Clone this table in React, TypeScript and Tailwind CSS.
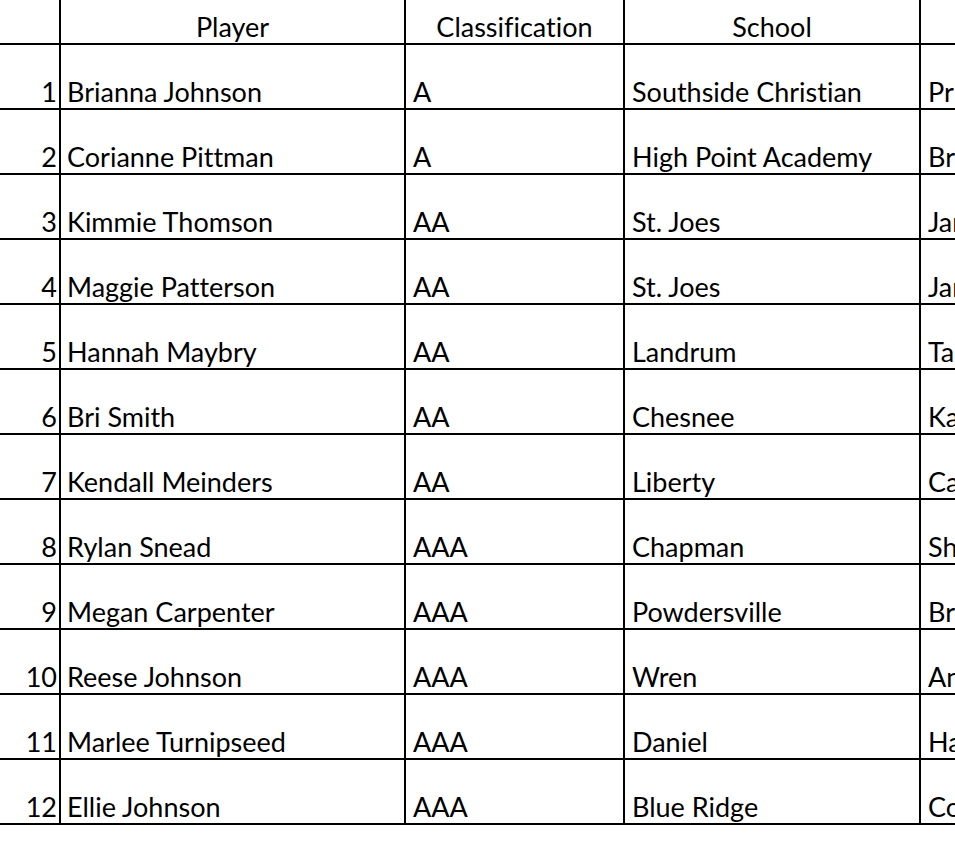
const rows = [
  { n: 1, player: "Brianna Johnson", cls: "A", school: "Southside Christian", coach: "Price" },
  { n: 2, player: "Corianne Pittman", cls: "A", school: "High Point Academy", coach: "Brad" },
  { n: 3, player: "Kimmie Thomson", cls: "AA", school: "St. Joes", coach: "James" },
  { n: 4, player: "Maggie Patterson", cls: "AA", school: "St. Joes", coach: "James" },
  { n: 5, player: "Hannah Maybry", cls: "AA", school: "Landrum", coach: "Tammy" },
  { n: 6, player: "Bri Smith", cls: "AA", school: "Chesnee", coach: "Kate" },
  { n: 7, player: "Kendall Meinders", cls: "AA", school: "Liberty", coach: "Carl" },
  { n: 8, player: "Rylan Snead", cls: "AAA", school: "Chapman", coach: "Shane" },
  { n: 9, player: "Megan Carpenter", cls: "AAA", school: "Powdersville", coach: "Brent" },
  { n: 10, player: "Reese Johnson", cls: "AAA", school: "Wren", coach: "Andy" },
  { n: 11, player: "Marlee Turnipseed", cls: "AAA", school: "Daniel", coach: "Hal" },
  { n: 12, player: "Ellie Johnson", cls: "AAA", school: "Blue Ridge", coach: "Cole" },
];

export default function App() {
  const cell = "border-2 border-black align-bottom whitespace-nowrap overflow-hidden leading-none";
  return (
    <div className="w-[955px] h-[848px] overflow-hidden bg-white text-black font-['Lato',sans-serif] text-[27px] [font-variant-ligatures:none]">
      <table className="border-collapse table-fixed w-[1120px] -mt-[1px]">
        <colgroup>
          <col className="w-[60px]" />
          <col className="w-[345px]" />
          <col className="w-[219px]" />
          <col className="w-[296px]" />
          <col className="w-[200px]" />
        </colgroup>
        <thead>
          <tr className="h-[45px]">
            <th className={`${cell} border-t-0 border-l-0 font-normal`}></th>
            <th className={`${cell} border-t-0 font-normal text-center pb-[3px]`}>Player</th>
            <th className={`${cell} border-t-0 font-normal text-center pb-[3px]`}>Classification</th>
            <th className={`${cell} border-t-0 font-normal text-center pb-[3px]`}>School</th>
            <th className={`${cell} border-t-0 border-r-0 font-normal`}></th>
          </tr>
        </thead>
        <tbody>
          {rows.map((r) => (
            <tr key={r.n} className="h-[65px]">
              <td className={`${cell} border-l-0 text-right pr-[2px] pb-[3px]`}>{r.n}</td>
              <td className={`${cell} text-left pl-[6px] pb-[3px]`}>{r.player}</td>
              <td className={`${cell} text-left pl-[7px] pb-[3px]`}>{r.cls}</td>
              <td className={`${cell} text-left pl-[7px] pb-[3px]`}>{r.school}</td>
              <td className={`${cell} border-r-0 text-left pl-[7px] pb-[3px]`}>{r.coach}</td>
            </tr>
          ))}
        </tbody>
      </table>
    </div>
  );
}
